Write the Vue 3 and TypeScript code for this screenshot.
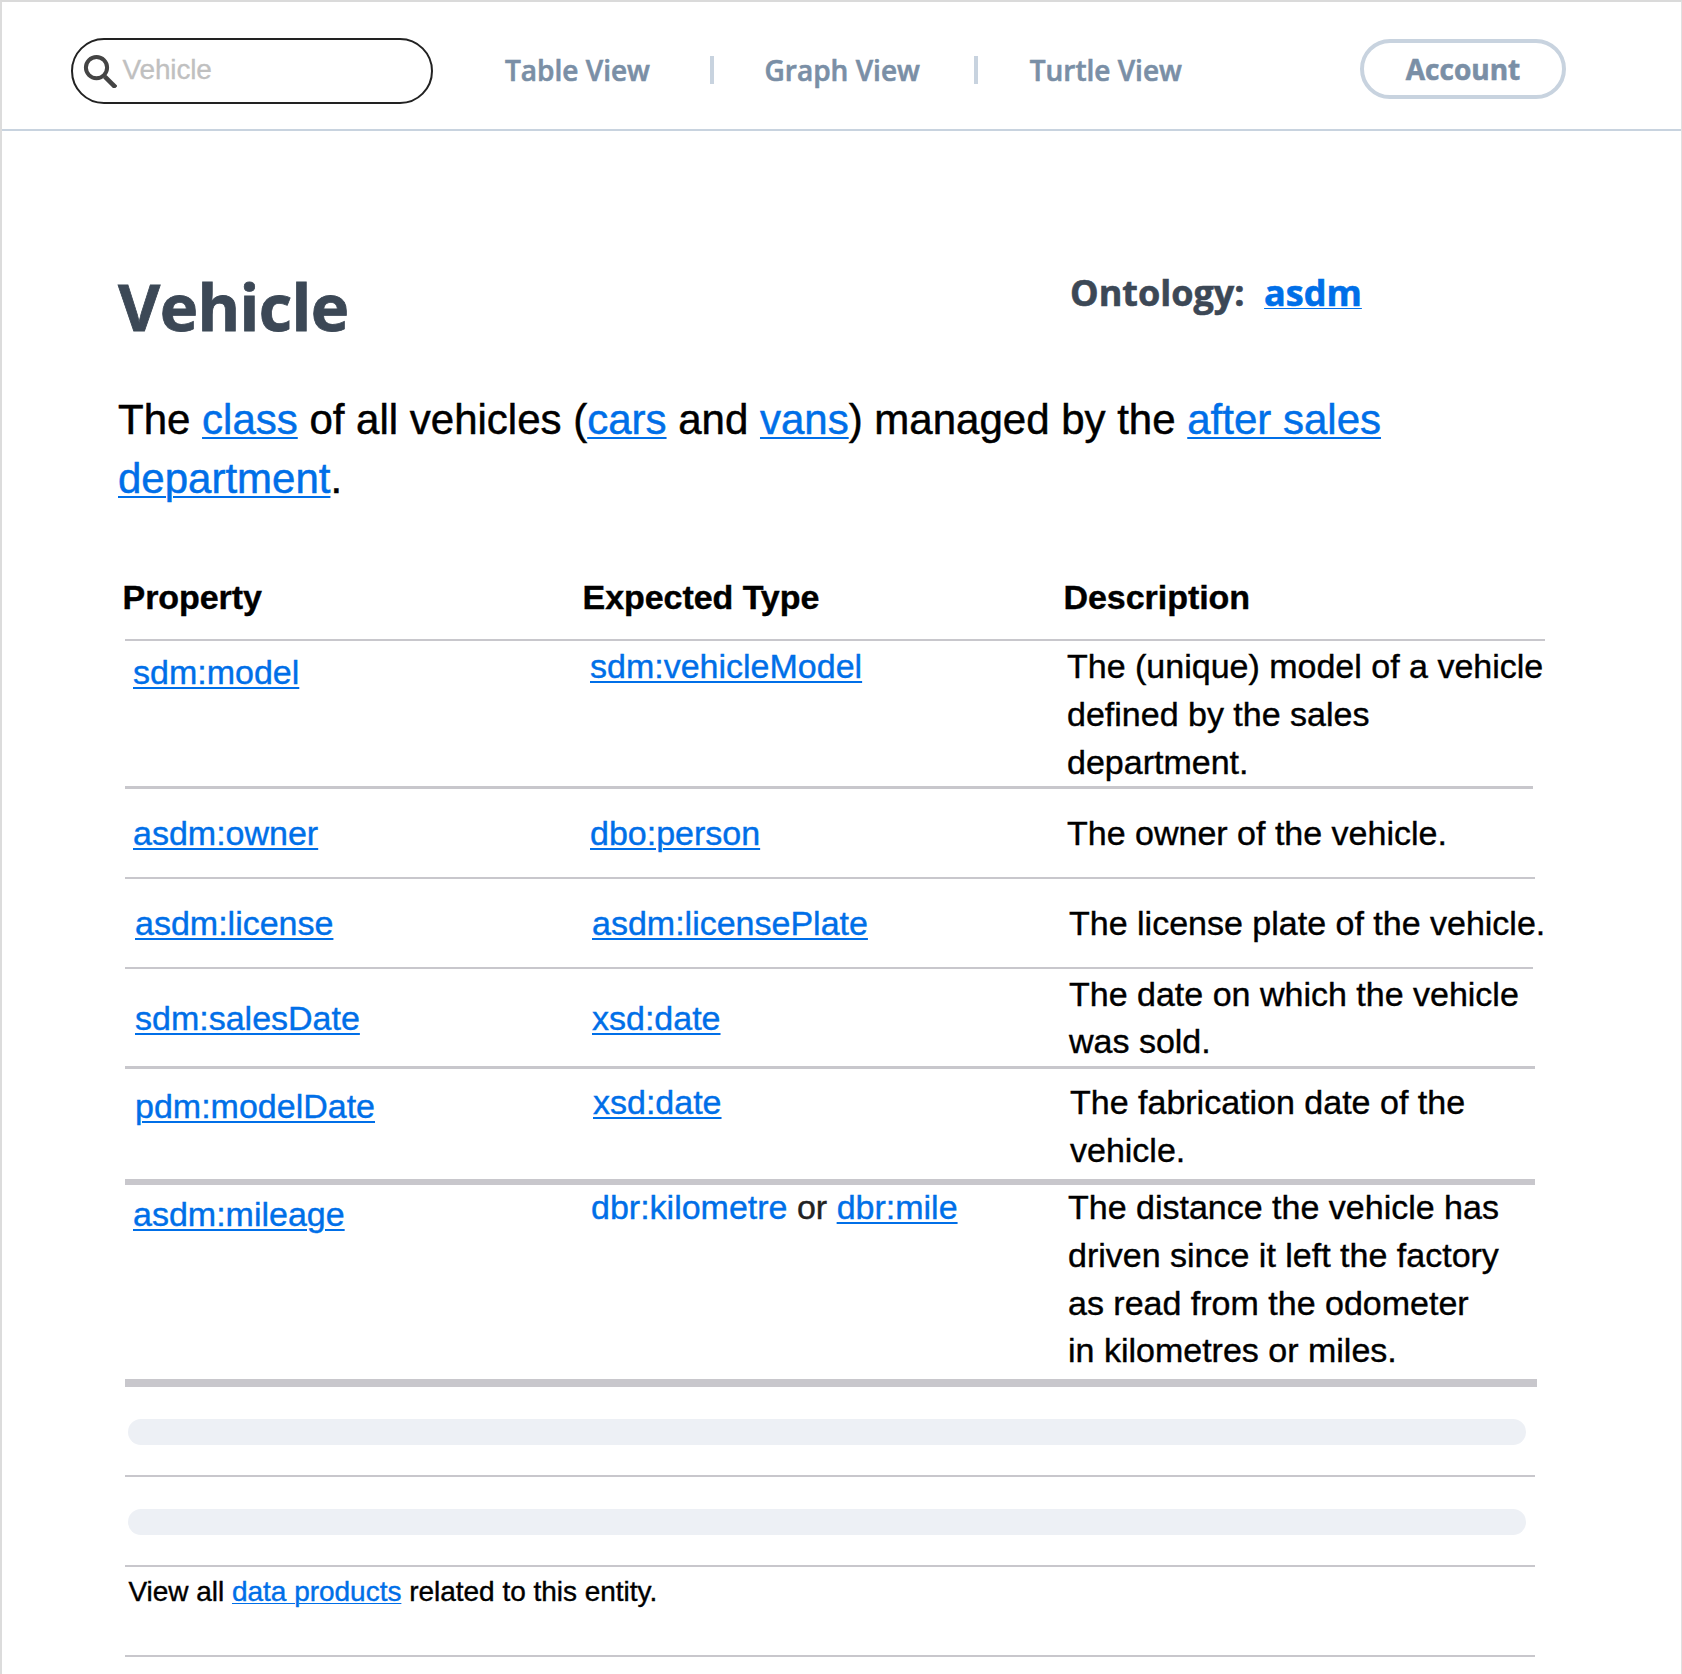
<script setup lang="ts">
interface TypePart {
  text: string
  kind: 'link' | 'bare' | 'plain'
}

interface PropertyRow {
  id: string
  name: string
  types: TypePart[]
  description: string[]
}

const views: string[] = ['Table View', 'Graph View', 'Turtle View']

const rows: PropertyRow[] = [
  {
    id: 'model',
    name: 'sdm:model',
    types: [{ text: 'sdm:vehicleModel', kind: 'link' }],
    description: ['The (unique) model of a vehicle', 'defined by the sales', 'department.'],
  },
  {
    id: 'owner',
    name: 'asdm:owner',
    types: [{ text: 'dbo:person', kind: 'link' }],
    description: ['The owner of the vehicle.'],
  },
  {
    id: 'license',
    name: 'asdm:license',
    types: [{ text: 'asdm:licensePlate', kind: 'link' }],
    description: ['The license plate of the vehicle.'],
  },
  {
    id: 'sales-date',
    name: 'sdm:salesDate',
    types: [{ text: 'xsd:date', kind: 'link' }],
    description: ['The date on which the vehicle', 'was sold.'],
  },
  {
    id: 'model-date',
    name: 'pdm:modelDate',
    types: [{ text: 'xsd:date', kind: 'link' }],
    description: ['The fabrication date of the', 'vehicle.'],
  },
  {
    id: 'mileage',
    name: 'asdm:mileage',
    types: [
      { text: 'dbr:kilometre', kind: 'bare' },
      { text: ' or ', kind: 'plain' },
      { text: 'dbr:mile', kind: 'link' },
    ],
    description: [
      'The distance the vehicle has',
      'driven since it left the factory',
      'as read from the odometer',
      'in kilometres or miles.',
    ],
  },
]
</script>

<template>
  <div class="page">
    <header class="topbar">
      <div class="search">
        <svg class="search-icon" width="36" height="36" viewBox="0 0 36 36">
          <circle cx="15.5" cy="15.6" r="10.6" fill="none" stroke="#444" stroke-width="4" />
          <path d="M23.8 24.6 L34.8 35.6" fill="none" stroke="#444" stroke-width="4.6" />
        </svg>
        <span class="placeholder">Vehicle</span>
      </div>
      <nav class="views">
        <template v-for="(view, i) in views" :key="view">
          <span v-if="i > 0" class="divider"></span>
          <a :class="['view', `view-${i}`]">{{ view }}</a>
        </template>
      </nav>
      <button class="account">Account</button>
    </header>

    <main class="content">
      <div class="heading">
        <h1>Vehicle</h1>
        <p class="ontology"><span>Ontology:</span><a>asdm</a></p>
      </div>

      <p class="summary">
        The <a>class</a> of all vehicles (<a>cars</a> and <a>vans</a>) managed by the <a>after sales</a><br />
        <a>department</a>.
      </p>

      <section class="table">
        <div class="row head">
          <span>Property</span>
          <span>Expected Type</span>
          <span>Description</span>
        </div>
        <div v-for="row in rows" :key="row.id" :class="['row', row.id]">
          <div class="prop"><a>{{ row.name }}</a></div>
          <div class="type">
            <template v-for="part in row.types" :key="part.text">
              <a v-if="part.kind !== 'plain'" :class="{ bare: part.kind === 'bare' }">{{ part.text }}</a>
              <span v-else class="plain">{{ part.text }}</span>
            </template>
          </div>
          <div class="desc">
            <div v-for="line in row.description" :key="line">{{ line }}</div>
          </div>
        </div>
        <div v-for="n in 2" :key="n" class="skeleton"><span></span></div>
        <div class="footer">View all <a>data products</a> related to this entity.</div>
      </section>
    </main>
  </div>
</template>

<style>
body {
  margin: 0;
  background: #fff;
}
</style>

<style scoped>
.page {
  box-sizing: border-box;
  width: 1682px;
  height: 1674px;
  overflow: hidden;
  border-top: 2px solid #dadada;
  border-right: 1px solid #e0e0e0;
  border-left: 2px solid #dcdcdc;
  background: #fff;
  color: #000;
  font-family: 'Liberation Sans', Arial, sans-serif;
}

.topbar {
  box-sizing: border-box;
  display: flex;
  align-items: flex-start;
  height: 129px;
  border-bottom: 2px solid #c8d3df;
  font-family: 'Open Sans', sans-serif;
  color: #7a8fa6;
}

.search {
  box-sizing: border-box;
  display: flex;
  flex: none;
  width: 362px;
  height: 66px;
  margin: 36px 0 0 69px;
  border: 2px solid #222;
  border-radius: 33px;
}

.search-icon {
  flex: none;
  margin: 12px 0 0 8px;
}

.placeholder {
  margin: 14px 0 0 5.5px;
  font: 28px/32px 'Liberation Sans', Arial, sans-serif;
  letter-spacing: -0.15px;
  color: #c0c0c0;
  -webkit-text-stroke: 0.3px;
}

.views {
  display: flex;
  flex: none;
  width: 855px;
  margin: 49px 0 0 72px;
}

.view {
  flex: none;
  font-size: 28px;
  font-weight: 600;
  line-height: 38px;
  white-space: nowrap;
  -webkit-text-stroke: 0.6px;
}

.view-0 {
  width: 205px;
}

.view-1 {
  width: 209.5px;
  margin-left: -0.5px;
}

.view-2 {
  margin-left: 0.7px;
}

.divider {
  flex: none;
  width: 4px;
  height: 28px;
  margin: 5px 51px 0 0;
  background: #c8d3df;
}

.account {
  box-sizing: border-box;
  width: 206px;
  height: 60px;
  margin: 37px 0 0;
  padding: 0;
  border: 4px solid #c8d3df;
  border-radius: 30px;
  background: #fff;
  color: #7a8fa6;
  font: 700 28px/50px 'Open Sans', sans-serif;
  -webkit-text-stroke: 0.6px;
}

.content {
  padding-left: 116px;
}

p,
h1 {
  margin: 0;
}

a {
  color: #006fe8;
  text-decoration: underline;
  text-decoration-thickness: 2px;
  text-underline-offset: 3px;
}

.topbar a {
  color: inherit;
  text-decoration: none;
}

.heading {
  display: flex;
  height: 250px;
  font-family: 'Open Sans', sans-serif;
  font-weight: 700;
  color: #3c4856;
}

h1 {
  width: 952px;
  margin-top: 131px;
  font-size: 65px;
  line-height: 88px;
  letter-spacing: -0.6px;
  -webkit-text-stroke: 0.8px;
}

.ontology {
  display: flex;
  gap: 19.5px;
  margin-top: 137px;
  font-size: 36px;
  line-height: 50px;
  -webkit-text-stroke: 0.6px;
}

.ontology a {
  text-decoration-thickness: 1px;
  text-underline-offset: 2px;
}

.summary {
  height: 183px;
  padding-top: 9px;
  font-size: 42px;
  line-height: 59px;
  white-space: nowrap;
  -webkit-text-stroke: 0.5px;
}

.table {
  margin-left: 7px;
  width: 1420px;
  font-size: 34px;
  line-height: 48px;
  white-space: nowrap;
  -webkit-text-stroke: 0.4px;
}

.row {
  display: grid;
  grid-template-columns: 457px 477px 1fr;
  align-items: start;
  padding-left: 8px;
  border-bottom: 2px solid #c8c7cc;
}

.head {
  grid-template-columns: 460px 481px 1fr;
  height: 66px;
  padding-left: 0;
  font-weight: 700;
  letter-spacing: -0.05px;
}

.head span {
  margin-left: -2.5px;
}

.model {
  width: 1400px;
  height: 145px;
  border-bottom-width: 3px;
}

.owner {
  width: 1402px;
  height: 88px;
}

.license {
  width: 1398px;
  height: 88px;
  padding-left: 10px;
}

.sales-date {
  width: 1400px;
  height: 97px;
  padding-left: 10px;
  border-bottom-width: 3px;
}

.model-date {
  grid-template-columns: 458px 477px 1fr;
  width: 1400px;
  height: 110px;
  padding-left: 10px;
  border-bottom-width: 6px;
}

.mileage {
  grid-template-columns: 458px 477px 1fr;
  width: 1404px;
  height: 194px;
  border-bottom-width: 8px;
}

.model .prop {
  margin-top: 7px;
}

.model .type,
.model .desc {
  margin-top: 1px;
}

.owner > div,
.license > div {
  margin-top: 20px;
}

.sales-date .prop,
.sales-date .type {
  margin-top: 25px;
}

.sales-date .desc {
  margin-top: 2px;
  line-height: 47px;
}

.model-date .prop {
  margin-top: 13px;
}

.model-date .type,
.model-date .desc {
  margin-top: 9px;
}

.mileage .prop {
  margin-top: 5px;
}

.mileage .type,
.mileage .desc {
  margin-top: -1px;
  line-height: 47.8px;
}

.bare {
  text-decoration: none;
}

.plain {
  color: #222;
  white-space: pre;
}

.skeleton {
  display: flex;
  height: 88px;
  border-bottom: 2px solid #c8c7cc;
}

.skeleton,
.footer {
  width: 1410px;
}

.skeleton span {
  width: 1398px;
  height: 26px;
  margin: 32px 0 0 3px;
  border-radius: 13px;
  background: #edf0f5;
}

.footer {
  height: 88px;
  border-bottom: 2px solid #c8c7cc;
  font-size: 28px;
  line-height: 50px;
  letter-spacing: -0.02px;
  text-indent: 3.4px;
}

.footer a {
  text-decoration-thickness: 1px;
  text-underline-offset: 2px;
}
</style>
